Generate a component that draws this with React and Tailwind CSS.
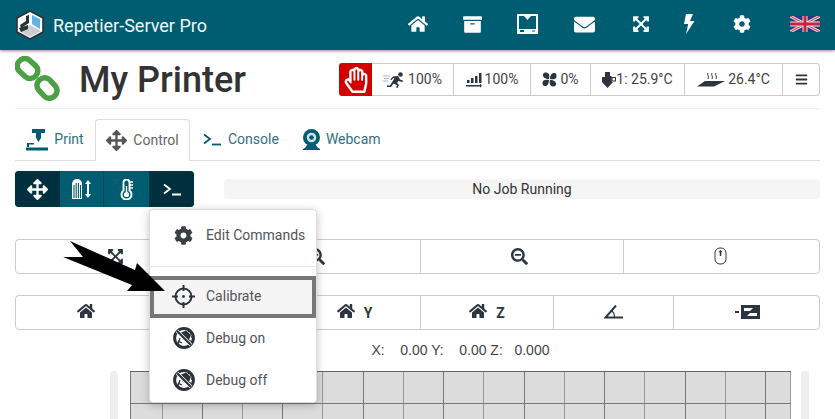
import { FaArchive, FaArrowsAlt, FaBars, FaCog, FaEnvelope, FaExpandArrowsAlt, FaHome, FaRegHandPaper, FaSearchMinus, FaSearchPlus } from 'react-icons/fa';

// small hand drawn icons the packages don't have
function Logo() {
  return (
    <svg width="28" height="30" viewBox="0 0 28 30">
      <polygon points="14,1 27,8 27,22 14,29 1,22 1,8" fill="#fff" stroke="#2c3138" strokeWidth="1.6" />
      <polygon points="14,15 25,21 14,27 3,21" fill="#c9cdd0" />
      <polygon points="16,5 16,14 24,19 24,9" fill="#5fb4e6" />
      <polygon points="13,5 13,13 5,18 4,15 10,11 10,6" fill="#2c3138" />
      <polygon points="3,18 12,15 12,19 5,22" fill="#2c3138" />
    </svg>
  );
}

function Chain() {
  return (
    <svg width="45" height="45" viewBox="0 0 45 45" fill="none" stroke="#4b9f45" strokeWidth="5.500">
      <rect x="-11" y="-7.500" width="22" height="15" rx="7" transform="translate(12.500 12.500) rotate(42)" />
      <rect x="-11" y="-7.500" width="22" height="15" rx="7" transform="translate(32 32) rotate(48)" />
    </svg>
  );
}

function Flag() {
  return (
    <svg width="30" height="16" viewBox="0 0 30 16">
      <rect width="30" height="16" fill="#2b3a78" />
      <path d="M0 0L30 16M30 0L0 16" stroke="#e8dfe6" strokeWidth="3" />
      <path d="M0 0L30 16M30 0L0 16" stroke="#c8243c" strokeWidth="1" />
      <path d="M15 0V16M0 8H30" stroke="#e8dfe6" strokeWidth="5" />
      <path d="M15 0V16M0 8H30" stroke="#c8243c" strokeWidth="3" />
    </svg>
  );
}

function Bolt() {
  return (
    <svg width="12" height="20" viewBox="0 0 12 20" fill="#fff">
      <path d="M3 0H10L7 7H11.500L3 20L5.200 10H1Z" />
    </svg>
  );
}

function PrinterBox() {
  return (
    <svg width="21" height="20" viewBox="0 0 21 20">
      <path d="M0 0H21V20H0Z M2 2V15H19V2Z" fill="#fff" fillRule="evenodd" />
      <path d="M7 2H14L10.500 6Z" fill="#fff" />
      <rect x="3" y="16" width="4" height="2" fill="#005c70" />
      <rect x="15" y="16.500" width="3" height="1" fill="#005c70" />
    </svg>
  );
}

function Runner() {
  return (
    <svg width="22" height="16" viewBox="0 0 22 16" fill="#2d3640">
      <circle cx="17.500" cy="2.500" r="2.300" />
      <path d="M10 4.500L15 4L17 7.500L20 8.500L19.500 10L15.500 9L14 11L16 13L14.500 16L13 15.500L14 13.300L10.500 11.500L8 15H4V13.500H7L11.500 6.300L10 6.300L8.500 8.300L7.300 7.400Z" />
      <path d="M0 4H7M1 6.500H6M0 9H5" stroke="#9aa0a5" strokeWidth="0.800" />
    </svg>
  );
}

function FlowIcon() {
  return (
    <svg width="16" height="16" viewBox="0 0 16 16" fill="#2d3640">
      <rect x="1" y="8" width="2.500" height="3" />
      <rect x="5" y="6" width="2.500" height="5" />
      <rect x="9" y="4" width="2.500" height="7" />
      <rect x="13" y="1" width="2.500" height="10" />
      <path d="M0 13H14V11.800L16 13.800L14 15.800V14.500H0Z" />
    </svg>
  );
}

function Fan() {
  return (
    <svg width="15" height="15" viewBox="0 0 15 15" fill="#2d3640">
      <path d="M7 7C3 7 0.500 5 1 2.500C1.500 0 5 0 6.500 1.500C7.500 3 7.500 5 7 7Z" />
      <path d="M8 7C8 3 10 0.500 12.500 1C15 1.500 15 5 13.500 6.500C12 7.500 10 7.500 8 7Z" />
      <path d="M8 8C12 8 14.500 10 14 12.500C13.500 15 10 15 8.500 13.500C7.500 12 7.500 10 8 8Z" />
      <path d="M7 8C7 12 5 14.500 2.500 14C0 13.500 0 10 1.500 8.500C3 7.500 5 7.500 7 8Z" />
    </svg>
  );
}

function Extruder() {
  return (
    <svg width="14" height="16" viewBox="0 0 14 16" fill="#2d3640">
      <path d="M3 0H8V4H9.500V10H11L5.500 16L0 10H3Z" />
      <path d="M0 5H9.500V10H0Z" />
      <path d="M9.500 5H14V9.500H9.500Z M10.500 6V8.500H13V6Z" fillRule="evenodd" />
    </svg>
  );
}

function Bed() {
  return (
    <svg width="28" height="16" viewBox="0 0 28 16">
      <path d="M8 9H28L17 14.500H0Z" fill="#2d3640" />
      <path d="M11 1C9.500 3 12.500 4 11 7M15 1C13.500 3 16.500 4 15 7M19 1C17.500 3 20.500 4 19 7" fill="none" stroke="#2d3640" strokeWidth="1" />
    </svg>
  );
}

function PrintTab() {
  return (
    <svg width="22" height="22" viewBox="0 0 22 22" fill="#005c70">
      <path d="M6 0H19V4H15V9L12.500 13L10 9V4H6Z" />
      <path d="M1 14H8V15.500H3V18H1Z" />
      <rect y="18.500" width="22" height="3" />
    </svg>
  );
}

function Prompt({ color, width = 18 }) {
  return (
    <svg width={width} height="13" viewBox="0 0 18 13" fill="none" stroke={color} strokeWidth="1.800">
      <path d="M1 1.500L7 6L1 10.500" />
      <path d="M9 11.500H18" />
    </svg>
  );
}

function Webcam() {
  return (
    <svg width="19" height="21" viewBox="0 0 19 21">
      <circle cx="9.500" cy="8.500" r="8.500" fill="#005c70" />
      <circle cx="9.500" cy="8.500" r="4.800" fill="#cfe0e4" />
      <circle cx="9.500" cy="8.500" r="2.300" fill="#005c70" />
      <path d="M1 20C3 19 4 18 5 16H14C15 18 16 19 18 20V21H1Z" fill="#005c70" />
    </svg>
  );
}

function Spool() {
  return (
    <svg width="21" height="20" viewBox="0 0 21 20" fill="#fff">
      <path d="M1 6C1 2 3 0 6 0C9 0 11 2 11 5V20H1Z" />
      <path d="M3 6V19M5.200 4V19M7.400 4V19M9.500 6V19" stroke="#005c70" strokeWidth="1.100" />
      <path d="M17 1L20 5H18V15H20L17 19L14 15H16V5H14Z" />
    </svg>
  );
}

function Thermo() {
  return (
    <svg width="14" height="21" viewBox="0 0 14 21" fill="none" stroke="#fff">
      <path d="M3.500 11.500V3.500A3 3 0 0 1 9.500 3.500V11.500A5 5 0 1 1 3.500 11.500Z" strokeWidth="1.900" />
      <circle cx="6.500" cy="15.500" r="2.600" fill="#fff" stroke="none" />
      <path d="M6.500 7V15M10 3H13M10 6H13M10 9H13" strokeWidth="1.400" />
    </svg>
  );
}

function Crosshair() {
  return (
    <svg width="23" height="23" viewBox="0 0 23 23" fill="none" stroke="#2d3238" strokeWidth="2">
      <circle cx="11.500" cy="11.500" r="8" />
      <path d="M11.500 0V6M11.500 17V23M0 11.500H6M17 11.500H23" />
      <circle cx="11.500" cy="11.500" r="1.400" fill="#2d3238" stroke="none" />
    </svg>
  );
}

function NoBug() {
  return (
    <svg width="22" height="22" viewBox="0 0 22 22">
      <path d="M7 6L13 3.500L18 8L15.500 14L10 13Z" fill="#2d3238" />
      <path d="M15 5L17 3M17 7L20 6M18 10L21 10M16 13L19 15M5 14L9 16M7 11L5 17" stroke="#2d3238" strokeWidth="1.300" />
      <circle cx="11" cy="11" r="9.400" fill="none" stroke="#2d3238" strokeWidth="3" />
      <path d="M4 4L18 18" stroke="#fff" strokeWidth="3.500" />
      <path d="M4 4L18 18" stroke="#2d3238" strokeWidth="2.200" />
    </svg>
  );
}

function MouseIcon() {
  return (
    <svg width="13" height="18" viewBox="0 0 13 18" fill="none" stroke="#2d3640" strokeWidth="1">
      <rect x="1" y="1" width="11" height="16" rx="5" />
      <path d="M6.500 4V9" strokeWidth="1.500" />
      <path d="M5 5L6.500 3L8 5Z" fill="#2d3640" strokeWidth="0.500" />
    </svg>
  );
}

function AngleIcon() {
  return (
    <svg width="19" height="14" viewBox="0 0 19 14" fill="none" stroke="#2d3640" strokeWidth="2">
      <path d="M12 0.500L1.500 12.500H19" />
      <path d="M8 6C10 7.500 10.500 9.500 10.500 12" strokeWidth="1.200" />
    </svg>
  );
}

function LevelIcon() {
  return (
    <svg width="25" height="14" viewBox="0 0 25 14" fill="#2d3640">
      <path d="M0 6H4V8H0Z" />
      <path d="M6 0H25V14H6Z M9 3V6H15L18 3Z M12 11H22V8H15Z" fillRule="evenodd" />
    </svg>
  );
}

const navItems = [
  { w: 'w-[54px]', icon: <FaHome size={20} color="#fff" /> },
  { w: 'w-[54px]', icon: <FaArchive size={19} color="#fff" /> },
  { w: 'w-[56px]', icon: <PrinterBox /> },
  { w: 'w-[58px]', icon: <FaEnvelope size={21} color="#fff" /> },
  { w: 'w-[56px]', icon: <FaExpandArrowsAlt size={18} color="#fff" /> },
  { w: 'w-[40px]', icon: <Bolt /> },
  { w: 'w-[66px]', icon: <FaCog size={18} color="#fff" /> },
  { w: 'w-[60px]', icon: <Flag /> },
];

const statusCells = [
  { w: 'w-[82px]', icon: <Runner />, text: '100%' },
  { w: 'w-[77px]', icon: <FlowIcon />, text: '100%' },
  { w: 'w-[60px]', icon: <Fan />, text: '0%' },
  { w: 'w-[94px]', icon: <Extruder />, text: '1: 25.9°C', tight: true },
  { w: 'w-[98px]', icon: <Bed />, text: '26.4°C' },
];

const gridX = [130, 162, 202, 242, 282, 322, 363, 403, 443, 483, 524, 564, 604, 644, 685, 725, 765, 790];

export default function App() {
  return (
    <div className="relative h-[419px] overflow-hidden bg-white font-['Roboto',sans-serif] text-[14px] text-[#444]">
      <header className="relative z-10 flex h-[50px] items-center bg-[#005c70] pl-[16px] shadow-[0_1px_3px_rgba(0,0,0,0.45)]">
        <Logo />
        <span className="ml-[9px] text-[18px] text-[#f2f7f8]">Repetier-Server Pro</span>
        <nav className="ml-auto flex h-full items-center pb-[2px]">
          {navItems.map((item, i) => (
            <div key={i} className={`flex items-center justify-center ${item.w}`}>{item.icon}</div>
          ))}
        </nav>
      </header>

      <main className="px-[15px]">
        <div className="flex h-[59px] items-center border-b border-[#eee]">
          <div className="-mt-[2px] w-[64px]"><Chain /></div>
          <h1 className="mt-[1px] text-[36px] leading-none font-medium text-[#333]">My Printer</h1>
          <div className="mt-[1px] ml-auto flex h-[33px] items-stretch">
            <div className="flex w-[33px] items-center justify-center rounded-l-[3px] bg-[#d40000]">
              <FaRegHandPaper size={26} color="#fff" />
            </div>
            <div className="flex rounded-r-[4px] border border-l-0 border-[#ccc]">
              {statusCells.map((cell, i) => (
                <div key={i} className={`flex items-center justify-center border-r border-[#ccc] ${cell.tight ? 'gap-0' : 'gap-[3px]'} ${cell.w}`}>
                  {cell.icon}
                  <span>{cell.text}</span>
                </div>
              ))}
              <div className="flex w-[36px] items-center justify-center">
                <FaBars size={13} color="#2d3640" />
              </div>
            </div>
          </div>
        </div>

        <div className="mt-[10px] flex h-[42px] items-stretch border-b border-[#ddd] text-[#32707f]">
          <div className="flex w-[80px] items-center justify-center gap-[6px]">
            <PrintTab />
            <span>Print</span>
          </div>
          <div className="-mb-px flex w-[95px] items-center justify-center gap-[6px] rounded-t-[4px] border border-b-0 border-[#ddd] bg-white text-[#666]">
            <FaArrowsAlt size={21} color="#555" />
            <span>Control</span>
          </div>
          <div className="ml-[12px] flex items-center gap-[6px]">
            <Prompt color="#005c70" width={20} />
            <span>Console</span>
          </div>
          <div className="ml-[23px] flex items-center gap-[5px]">
            <Webcam />
            <span>Webcam</span>
          </div>
        </div>

        <div className="mt-[10px] flex items-start">
          <div className="flex h-[36px] w-[179px] overflow-hidden rounded-[4px] bg-[#005c70]">
            <div className="flex w-[45px] items-center justify-center bg-[#00303d]"><FaArrowsAlt size={21} color="#fff" /></div>
            <div className="flex w-[44px] items-center justify-center border-r border-[#004a5a]"><Spool /></div>
            <div className="flex w-[45px] items-center justify-center"><Thermo /></div>
            <div className="flex w-[45px] items-center justify-center bg-[#00303d]"><Prompt color="#fff" /></div>
          </div>
          <div className="mt-[8px] ml-[30px] flex h-[20px] w-[596px] items-center justify-center rounded-[4px] bg-[#f5f5f5] text-[14px] text-[#333]">
            No Job Running
          </div>
        </div>

        <div className="mt-[32px] grid h-[35px] w-[805px] grid-cols-[203px_202px_203px_197px] rounded-[4px] border border-[#ccc]">
          <div className="flex items-center justify-center border-r border-[#ccc] pr-[3px] pb-[1px]"><FaExpandArrowsAlt size={17} color="#2d3640" /></div>
          <div className="flex items-center justify-center border-r border-[#ccc] pr-[7px] pb-[1px]"><FaSearchPlus size={17} color="#2d3640" /></div>
          <div className="flex items-center justify-center border-r border-[#ccc] pr-[5px] pb-[1px]"><FaSearchMinus size={17} color="#2d3640" /></div>
          <div className="flex items-center justify-center pr-[5px] pb-[1px]"><MouseIcon /></div>
        </div>

        <div className="mt-[21px] grid h-[35px] w-[805px] grid-cols-[140px_133px_132px_133px_120px_147px] rounded-[4px] border border-[#ccc] text-[14px] font-bold text-[#2d3640]">
          <div className="flex items-center justify-center border-r border-[#ccc] pb-[3px]"><FaHome size={18} /></div>
          <div className="flex items-center justify-center gap-[9px] border-r border-[#ccc]"><FaHome size={18} className="-mt-[3px]" /><span className="mt-[2px]">X</span></div>
          <div className="flex items-center justify-center gap-[9px] border-r border-[#ccc]"><FaHome size={18} className="-mt-[3px]" /><span className="mt-[2px]">Y</span></div>
          <div className="flex items-center justify-center gap-[9px] border-r border-[#ccc]"><FaHome size={18} className="-mt-[3px]" /><span className="mt-[2px]">Z</span></div>
          <div className="flex items-center justify-center border-r border-[#ccc] pb-[2px]"><AngleIcon /></div>
          <div className="flex items-center justify-center pb-[2px]"><LevelIcon /></div>
        </div>

        <p className="mt-[12px] h-[17px] pl-[86px] text-center font-['Liberation_Sans',sans-serif] text-[14px] leading-[17px] whitespace-pre text-[#444]">
          {'X:    0.00 Y:    0.00 Z:   0.000'}
        </p>

        <div className="mt-[12px] ml-[95px] flex items-start">
          <div className="h-[60px] w-[8px] rounded-t-[4px] bg-[#eee]" />
          <svg width="661" height="60" className="ml-[12px] block">
            <rect width="661" height="60" fill="#dcdcdc" />
            {gridX.map((x, i) => (
              <line key={x} x1={x - 129.5} x2={x - 129.5} y1="0" y2="60" stroke={i % 2 ? '#999' : '#777'} strokeWidth="1" />
            ))}
            <line x1="0" x2="661" y1="0.5" y2="0.5" stroke="#666" />
            <line x1="0" x2="661" y1="32.5" y2="32.5" stroke="#777" />
          </svg>
          <div className="ml-[10px] h-[60px] w-[8px] rounded-t-[4px] bg-[#eee]" />
        </div>
      </main>

      {/* dropdown of the terminal button */}
      <div className="absolute top-[209px] left-[149px] z-20 w-[168px] rounded-[4px] border border-[#ddd] bg-white text-[#555] shadow-[0_2px_8px_rgba(0,0,0,0.25)]">
        <div className="flex h-[56px] items-center pb-[6px] pl-[24px]">
          <FaCog size={19} color="#3a3f45" />
          <span className="ml-[13px]">Edit Commands</span>
        </div>
        <div className="h-px bg-[#e5e5e5]" />
        <div className="mt-[9px] flex h-[42px] items-center border-[4px] border-[#777] bg-[#f4f4f4] pb-[1px] pl-[18px]">
          <Crosshair />
          <span className="ml-[11px]">Calibrate</span>
        </div>
        <div className="flex h-[42px] items-center pb-[2px] pl-[23px]">
          <NoBug />
          <span className="ml-[11px]">Debug on</span>
        </div>
        <div className="flex h-[42px] items-center pb-[2px] pl-[23px]">
          <NoBug />
          <span className="ml-[11px]">Debug off</span>
        </div>
      </div>

      {/* annotation arrow drawn over the shot */}
      <svg width="835" height="419" className="pointer-events-none absolute top-0 left-0 z-30">
        <polygon points="70,241 83,257 63,257 132,285 127,291 165,291 137,263 135,270" fill="#000" />
      </svg>
    </div>
  );
}
